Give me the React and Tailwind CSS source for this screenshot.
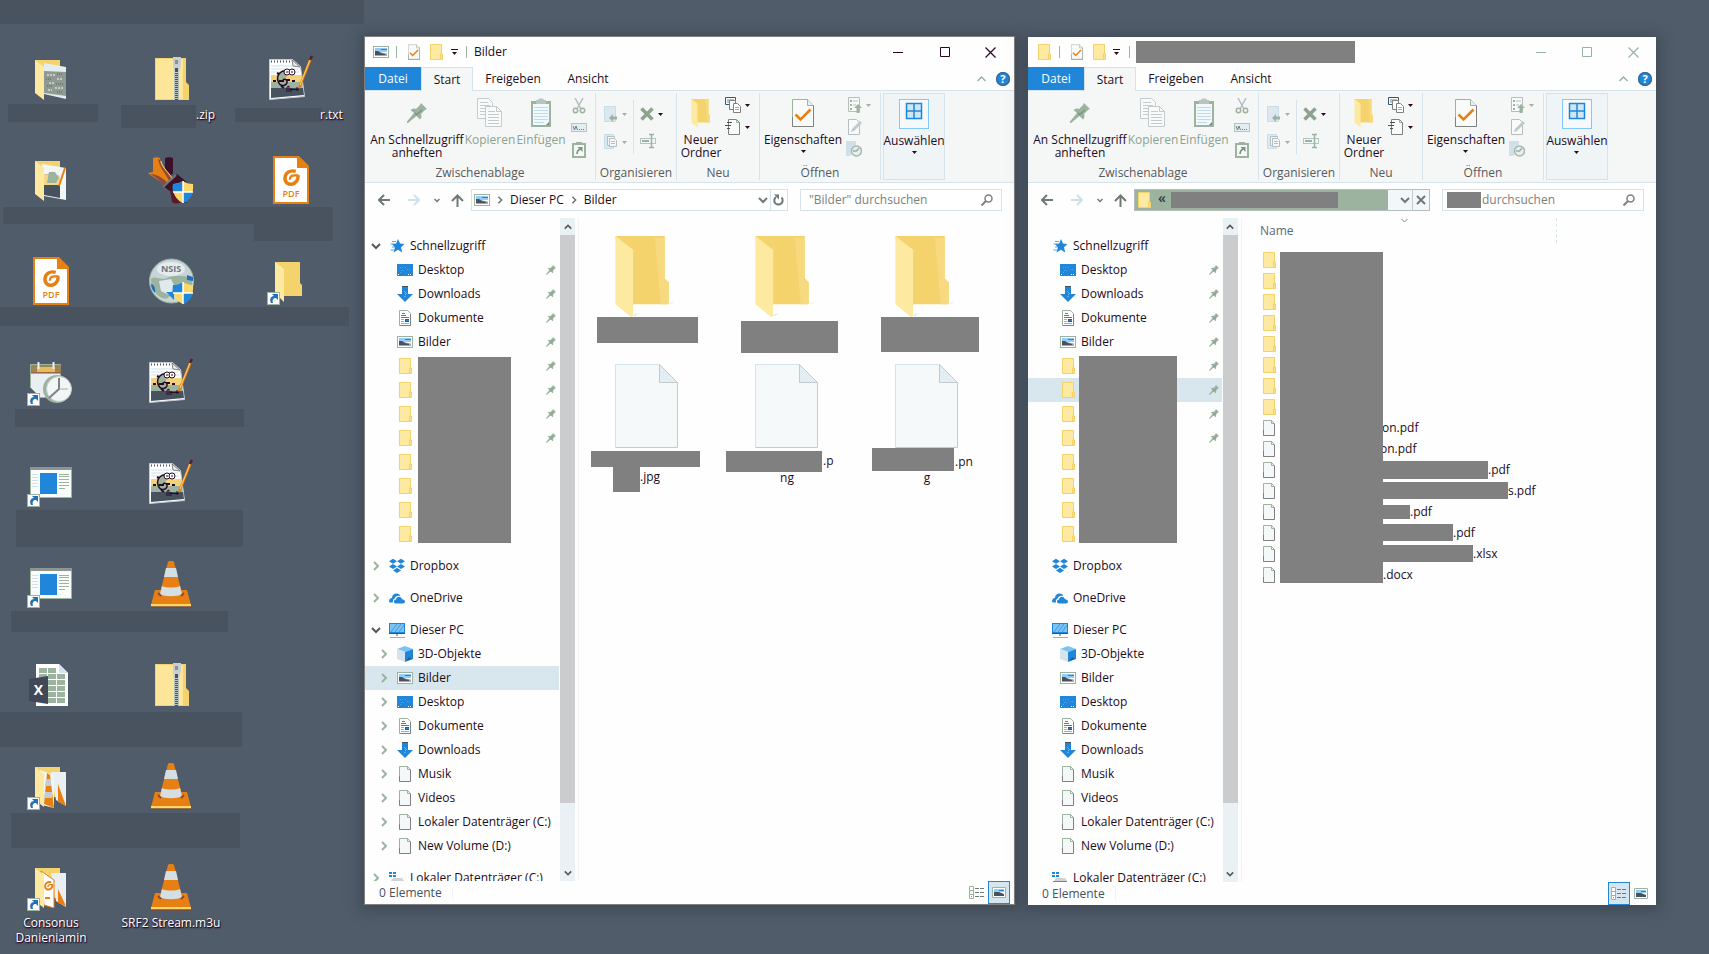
import { useState } from 'react';

/* ---------- small icons (16px) ---------- */

const FolderIcon = () => (
  <svg width="16" height="16" viewBox="0 0 16 16" className="shrink-0">
    <path d="M2.5.5h11v10h1v5h-12z" fill="#fde9a0" stroke="#f3d26a" />
    <path d="M12.5 10v5.5h2V10z" fill="#fbe08c" stroke="#f3d26a" />
  </svg>
);

const FileIcon = () => (
  <svg width="16" height="16" viewBox="0 0 16 16" className="shrink-0">
    <path d="M2.5 15.5V.5h8l3 3v12z" fill="#f5f8f8" />
    <path d="M2.5 15.5V.5h8l3 3" fill="none" stroke="#9bb39f" />
    <path d="M2.5 10v5.5h11v-12" fill="none" stroke="#808080" />
    <path d="M10.5.5v3h3" fill="none" stroke="#9bb39f" />
  </svg>
);

const PictureIcon = () => (
  <svg width="16" height="16" viewBox="0 0 16 16" className="shrink-0">
    <rect x=".5" y="2.5" width="15" height="11" fill="#fff" stroke="#9bb39f" />
    <rect x="2" y="4" width="12" height="4" fill="#93cbf5" />
    <path d="M8 5h6v1H8z" fill="#1f86da" />
    <path d="M2 7.500l4 .5 8 1.500V12H2z" fill="#9aa9b4" />
    <path d="M2 7h3l3 2 4 1v1H2z" fill="#47525f" />
  </svg>
);

const StarIcon = () => (
  <svg width="16" height="16" viewBox="0 0 16 16" className="shrink-0">
    <path d="M9 1l2 4.500 4.500.500-3.500 3.200 1.200 5.300L9 11.700 4.500 14.500l1.400-5L3 6l4.200-.500z" fill="#1f86da" />
    <path d="M3 3.500h4M1.500 6h4M3 9h3M1.500 12h4" stroke="#5aaae6" />
  </svg>
);

const DesktopIcon = () => (
  <svg width="16" height="16" viewBox="0 0 16 16" className="shrink-0">
    <rect y="2" width="16" height="12" fill="#1f86da" />
    <path d="M3 5.500h3M8 5.500h2M4 8.500h4M10 7.500h3M3 10.500h2" stroke="#4fa4e8" strokeDasharray="1 1" />
    <path d="M1 12.500h2M11 12.500h4" stroke="#fff" strokeDasharray="1 1" />
  </svg>
);

const DownloadsIcon = () => (
  <svg width="16" height="16" viewBox="0 0 16 16" className="shrink-0">
    <path d="M5 0h6v8h5l-8 8-8-8h5z" fill="#1f86da" />
    <path d="M5 .5h6" stroke="#47525f" />
    <path d="M7 5l2 2M8 9l2-2M7 11l2-1" stroke="#6db7f0" />
  </svg>
);

const DocumentsIcon = () => (
  <svg width="16" height="16" viewBox="0 0 16 16" className="shrink-0">
    <path d="M2.500 .500h8l3 3v12h-11z" fill="#fff" stroke="#9bb39f" />
    <path d="M13.500 4v11.500H3" fill="none" stroke="#808080" />
    <path d="M5 3.500h3M4 5.500h5M4 7.500h8" stroke="#1f86da" />
    <path d="M4 9.500h3M4 11.500h3M4 13.500h8" stroke="#9bb39f" />
    <path d="M8 9h4v3H8z" fill="#47525f" />
    <path d="M9 10h3v1H9z" fill="#1f86da" />
  </svg>
);

const DropboxIcon = () => (
  <svg width="16" height="16" viewBox="0 0 16 16" className="shrink-0">
    <path d="M4 .8L0 3.300l4 2.500 4-2.500zM12 .8L8 3.300l4 2.500 4-2.500zM4 6L0 8.500 4 11l4-2.500zM12 6L8 8.500l4 2.500 4-2.500zM8 9.800l-4 2.700L8 15l4-2.500z" fill="#1f86da" />
  </svg>
);

const OneDriveIcon = () => (
  <svg width="16" height="16" viewBox="0 0 16 16" className="shrink-0">
    <path d="M0 11.500C0 9 1.500 8 3 8c0-3 2-4.500 4.500-4.500 2 0 3.500 1 4 2.500C8 5 6 7 5.500 8.800 4 9 3.500 10.500 4 12.500H2c-1.200 0-2-.500-2-1z" fill="#1f86da" />
    <path d="M5 11.800c0-1.500 1-2.300 2-2.300.3-1.800 1.500-2.700 3-2.700s2.600 1 3 2.400c1.800 0 3 1 3 2.400 0 1.200-1 1.900-2 1.900H7c-1.200 0-2-.700-2-1.700z" fill="#1f86da" />
  </svg>
);

const PcIcon = () => (
  <svg width="16" height="16" viewBox="0 0 16 16" className="shrink-0">
    <rect x=".5" y="1.500" width="15" height="9" fill="#7cc3f5" stroke="#1f86da" />
    <path d="M2 10l6-8M6 10l6-8M10 10l5-7" stroke="#3a97e2" />
    <path d="M0 11.500h16" stroke="#47525f" />
    <path d="M7 12h2v2H7z" fill="#9aa9b4" />
    <path d="M1 15.500h15" stroke="#9bb39f" />
  </svg>
);

const CubeIcon = () => (
  <svg width="16" height="16" viewBox="0 0 16 16" className="shrink-0">
    <path d="M0 3l8-3 8 3-8 3z" fill="#7cc3f5" />
    <path d="M0 3l8 3v10l-8-3z" fill="#d5e4ec" />
    <path d="M16 3L8 6v10l8-3z" fill="#1f86da" />
    <path d="M9 15l3-4 3 2z" fill="#2b5e8c" />
  </svg>
);

const DriveIcon = () => (
  <svg width="16" height="16" viewBox="0 0 16 16" className="shrink-0">
    <path d="M0 2h3v2H0zM4 2h3v2H4zM0 5h3v2H0zM4 5h3v2H4z" fill="#1f86da" />
    <path d="M4 8h9l2 3H2z" fill="#cdd3d6" />
    <path d="M1 11h14v3H1z" fill="#808080" />
  </svg>
);

const PinIcon = ({ size = 10 }) => (
  <svg width={size} height={size} viewBox="0 0 20 20" className="shrink-0">
    <path d="M14 0l6 6-2 1-4 4c1 2 .500 4-1 5.500l-3.500-3.500L1 20H0v-1.500l7-8.500-3.500-3C5 5.500 7.500 5 9 6l4-4z" fill="#9bb39f" />
    <path d="M9 12l6-5M8 10l2 2" stroke="#7d9481" strokeWidth="1.500" />
  </svg>
);

const Chevron = ({ dir, className }) => {
  const d = { right: 'M3 1l4 4-4 4', down: 'M1 3l4 4 4-4', up: 'M1 7l4-4 4 4' };
  return (
    <svg width="10" height="10" viewBox="0 0 10 10" className={className}>
      <path d={d[dir]} fill="none" stroke="currentColor" strokeWidth="2" />
    </svg>
  );
};

const Caret = ({ className = 'text-[#2a0a22]' }) => (
  <svg width="5" height="3" viewBox="0 0 5 3" className={className}>
    <path d="M0 0h5L2.500 3z" fill="currentColor" />
  </svg>
);

const CheckedFile = ({ w, h }) => (
  <svg width={w} height={h} viewBox="0 0 22 28" className="shrink-0">
    <path d="M.500 27.500V.500h15l6 6v21z" fill="#f9fbfb" stroke="#9bb39f" />
    <path d="M.500 18v9.500h21v-21" fill="none" stroke="#808080" />
    <path d="M15.500 .500v6h6" fill="#e8eff2" stroke="#9bb39f" />
    <path d="M3.500 15.500l5 5 10-10" fill="none" stroke="#e87f12" strokeWidth="2.500" />
  </svg>
);

/* ---------- ribbon icons ---------- */

const CopyIcon = () => (
  <svg width="26" height="30" viewBox="0 0 26 30">
    <path d="M.500 20.500V.500h11l4 4v16z" fill="#f9fbfb" stroke="#c5cacc" />
    <path d="M3 4.500h8M3 7.500h10M3 10.500h10M3 13.500h5M3 16.500h5" stroke="#c5cacc" />
    <path d="M8.500 28.500v-20h11l5 5v15z" fill="#f9fbfb" stroke="#c5cacc" />
    <path d="M19.500 8.500v5h5" fill="none" stroke="#c5cacc" />
    <path d="M11 13.500h7M11 16.500h11M11 19.500h11M11 22.500h11M11 25.500h11" stroke="#c5cacc" />
  </svg>
);

const ClipboardIcon = () => (
  <svg width="20" height="30" viewBox="0 0 20 30">
    <path d="M0 3h20v26H0z" fill="#9bb39f" />
    <path d="M2 6h16v21H2z" fill="#f3f8fb" />
    <path d="M7 2c0-2 6-2 6 0h2v4H5V2z" fill="#b9c3c2" />
    <path d="M3 9.500h14M3 12.500h14M3 15.500h14M3 18.500h14M3 21.500h14M3 24.500h10" stroke="#bdd9ea" />
    <path d="M15 27h3v-3z" fill="#808080" />
  </svg>
);

const ScissorsIcon = () => (
  <svg width="14" height="16" viewBox="0 0 14 16" fill="none">
    <path d="M3 0l6 11M11 0L5 11" stroke="#b5bdbf" strokeWidth="1.500" />
    <circle cx="3.500" cy="12.500" r="2.200" stroke="#9bb39f" strokeWidth="1.500" />
    <circle cx="10.500" cy="12.500" r="2.200" stroke="#9bb39f" strokeWidth="1.500" />
  </svg>
);

const PathIcon = () => (
  <svg width="16" height="10" viewBox="0 0 16 10">
    <rect x=".5" y=".5" width="15" height="8" fill="#e3eef4" stroke="#b5c4c4" />
    <path d="M2 3l1.500 4L5 3l1.500 4" fill="none" stroke="#6f7f76" />
    <path d="M8 6.500h1M10 6.500h1M12 6.500h1" stroke="#6f7f76" />
  </svg>
);

const PasteLinkIcon = () => (
  <svg width="14" height="16" viewBox="0 0 14 16">
    <rect x="1" y="2" width="12" height="13" fill="#f5f8f8" stroke="#9bb39f" strokeWidth="2" />
    <path d="M4 0h6v3H4z" fill="#9bb39f" />
    <path d="M5 12c0-3 1-4 3-5" fill="none" stroke="#7d9481" strokeWidth="1.500" />
    <path d="M5.500 5h5v5z" fill="#7d9481" />
  </svg>
);

const MoveIcon = () => (
  <svg width="14" height="16" viewBox="0 0 14 16">
    <path d="M.500 .500h11v15H.500z" fill="#dbe8ef" stroke="#c9dde8" />
    <path d="M5 12l4-4v2.500h4v3H9V16z" fill="#9bb39f" />
  </svg>
);

const CopyToIcon = () => (
  <svg width="14" height="16" viewBox="0 0 14 16">
    <path d="M.500 .500h9v14h-9z" fill="#dbe8ef" stroke="#c9dde8" />
    <path d="M3.500 2.500h7v9h-7z" fill="#f5f8f8" stroke="#b5bdbf" />
    <path d="M5.500 4.500h5l2 2v6h-7z" fill="#f5f8f8" stroke="#b5bdbf" />
    <path d="M7 7.500h4M7 9.500h4" stroke="#b5bdbf" />
  </svg>
);

const DeleteIcon = () => (
  <svg width="14" height="14" viewBox="0 0 14 14">
    <path d="M1.500 1.500l11 11M12.500 1.500l-11 11" stroke="#8ba38f" strokeWidth="3.500" />
  </svg>
);

const RenameIcon = () => (
  <svg width="16" height="16" viewBox="0 0 16 16" fill="none">
    <rect x=".5" y="5.500" width="15" height="5" stroke="#b5c4c4" />
    <path d="M2 8h7" stroke="#9bb39f" strokeWidth="2" />
    <path d="M9 1.500h5M9 14.500h5M11.500 2v12" stroke="#9bb39f" strokeWidth="1.500" />
  </svg>
);

const OpenFolder = ({ w, h, className = '' }) => (
  <svg width={w} height={h} viewBox="0 0 56 82" className={`shrink-0 ${className}`}>
    <path d="M56 68l5-2-5 3zM18 80l6-2-4 3z" fill="#d5e4ec" />
    <path d="M0 0h50v43l4 4v22H16z" fill="#f5d36c" />
    <path d="M40 2h10v41l4 4v22h-8z" fill="#f7da80" />
    <path d="M0 0l18 14v67l-2 1L0 69z" fill="#fde9a0" />
  </svg>
);

const NewItemIcon = () => (
  <svg width="16" height="16" viewBox="0 0 16 16">
    <path d="M.500 .500h10v7H.500z" fill="#fff" stroke="#47525f" />
    <path d="M2 2h7v4H2z" fill="#93cbf5" />
    <path d="M4.500 3.500h6v9h-6z" fill="#fff" stroke="#808080" />
    <path d="M8.500 6.500h4l3 3v6h-7z" fill="#fff" stroke="#808080" />
    <path d="M10 10.500h4M10 12.500h4" stroke="#9bb39f" />
  </svg>
);

const EasyAccessIcon = () => (
  <svg width="16" height="16" viewBox="0 0 16 16">
    <path d="M3.500 .500h8l3 3v12h-11z" fill="#f9fbfb" stroke="#808080" />
    <path d="M11.500 .500v3h3" fill="none" stroke="#9bb39f" />
    <path d="M2 3.500h5M0 6.500h6M2 9.500h3" stroke="#47525f" />
  </svg>
);

const OpenIcon = () => (
  <svg width="16" height="16" viewBox="0 0 16 16">
    <path d="M2.500 .500h11v14h-11z" fill="#f9fbfb" stroke="#b5bdbf" />
    <path d="M4 3h2v2H4zM4 7h2v2H4zM4 11h2v2H4z" fill="#9bb39f" />
    <path d="M7 4h5M7 8h3" stroke="#b5bdbf" />
    <path d="M12 7l4 4h-2.500v5h-3v-5H8z" fill="#9bb39f" />
  </svg>
);

const EditIcon = () => (
  <svg width="16" height="16" viewBox="0 0 16 16">
    <path d="M2.500 .500h8l3 3v12h-11z" fill="#f9fbfb" stroke="#b5bdbf" />
    <path d="M5 13l1-3 8-8 2 2-8 8z" fill="#c0c8ca" />
  </svg>
);

const HistoryIcon = () => (
  <svg width="16" height="16" viewBox="0 0 16 16">
    <path d="M0 0h10v10l-6 5H0z" fill="#d0e0ea" />
    <circle cx="10.500" cy="10" r="5" fill="#e6eeee" stroke="#a9b8af" strokeWidth="1.500" />
    <path d="M7 10h3.500L13 7" fill="none" stroke="#9bb39f" strokeWidth="1.500" />
  </svg>
);

const SelectIcon = () => (
  <svg width="30" height="30" viewBox="0 0 30 30">
    <rect x=".5" y=".5" width="29" height="29" fill="#f5f9fb" stroke="#84c8f8" />
    <path d="M7.500 4.500h15v15h-15zM15 4v16M7 12h16" fill="#d0e6f5" stroke="#1f86da" strokeWidth="1.500" />
  </svg>
);

/* ---------- desktop icons (48px) ---------- */

const ShortcutBadge = () => (
  <g>
    <rect x=".5" y="35.500" width="12" height="12" fill="#fff" stroke="#9bb39f" />
    <path d="M4 46c-2-4 0-7 3-7l-2-2h6v6l-2-2c-3 0-4 2-3 5z" fill="#2270b5" />
  </g>
);

const Shield = () => (
  <g>
    <path d="M36 25c3 2 6 3 10 3 1 9-3 16-10 19-7-3-11-10-10-19 4 0 7-1 10-3z" fill="#ffd968" />
    <path d="M36 25v11H26c-.500-3-.500-5 0-8 4 0 7-1 10-3zM36 36h10c-1 5-5 9-10 11z" fill="#1f86da" />
    <path d="M36 25v22M26 36h20" stroke="#fff" strokeWidth="1.500" />
  </g>
);

const Cone = () => (
  <g>
    <path d="M8 30h32l4 15H4z" fill="#e87f12" />
    <path d="M4 44h40v2.500H4z" fill="#ffd968" />
    <path d="M21 2c0-1.500 6-1.500 6 0l8 31c-3 4-19 4-22 0z" fill="#e87f12" />
    <path d="M19 8h10l2 9H17zM15 26c4 2 14 2 18 0l2 8c-4 3-18 3-22 0z" fill="#d4dfe3" />
    <path d="M14 36l-3-3M34 36l3-3" stroke="#8d4a3a" strokeWidth="2" />
    <path d="M4 47h40" stroke="#8d3f20" />
  </g>
);

const FoxitG = ({ x, y, s }) => (
  <g transform={`translate(${x} ${y}) scale(${s})`} fill="none" stroke="#e87f12">
    <path d="M13 2.500C7 .500 2 4 2 9.500 2 14 5.500 16 9 15.500c4-.700 6.500-4 6.500-9" strokeWidth="3.500" />
    <path d="M16 6.500h-4C9 6.500 7 8 7 11" strokeWidth="2.200" />
  </g>
);

const DesktopGlyph = ({ type }) => {
  const glyphs = {
    photos: (
      <g>
        <path d="M8 5h25v30H8z" fill="#f5d36c" />
        <path d="M17 8l22 4v32l-22-5z" fill="#e5ecee" />
        <path d="M17 16l22 1v24l-22-3z" fill="#8f9a92" />
        <path d="M20 20h8M30 24h6M22 28h5M28 33h9M21 35h4" stroke="#c3ccc5" strokeWidth="2" strokeDasharray="2 1" />
        <path d="M19 24h6M29 29h7M20 31h6M30 19h6M30 37h6" stroke="#747d78" strokeWidth="2" strokeDasharray="1 1" />
        <path d="M8 5l9 7v33l-9-7z" fill="#fde9a0" />
      </g>
    ),
    pictures: (
      <g>
        <path d="M8 5h25v30H8z" fill="#f5d36c" />
        <path d="M15 8l24 4v32l-22-4z" fill="#f3f6f7" />
        <path d="M17 18l16 2v22l-16-3z" fill="#47525f" />
        <path d="M17 18l16 2v9H17z" fill="#f2d98a" />
        <path d="M22 16h6l4 6-3 5h-9z" fill="#9bb39f" />
        <path d="M38 12l-6 18" stroke="#e87f12" strokeWidth="2" />
        <path d="M8 5l9 7v33l-9-7z" fill="#fde9a0" />
      </g>
    ),
    zip: (
      <g>
        <path d="M8 3h31v24l3 3v15H8z" fill="#f5d36c" />
        <path d="M9 4h27v40H9z" fill="#fde59a" />
        <path d="M27 3h5v42h-5z" fill="#b7c2bf" />
        <path d="M29.500 14v31" stroke="#47525f" strokeWidth="3" strokeDasharray="1 1" />
        <path d="M26 2h8v8l-2 8h-5l-1-8z" fill="#c9ced0" />
        <path d="M28 5h3v4h-3z" fill="#8b9296" />
        <path d="M28 13h3v4h-3z" fill="#47525f" />
      </g>
    ),
    notepad: (
      <g>
        <path d="M2.500 4.500h23l8 7 4 30-35 3z" fill="#fff" stroke="#c5cacc" />
        <path d="M4 11h26M4 14h27M4 17h28" stroke="#cfe1ec" />
        <path d="M4 20h30l1 9H4z" fill="#f2d27a" />
        <path d="M4 27h31l1 7H4z" fill="#9bb39f" />
        <path d="M4 33h32l1 7-33 3z" fill="#47525f" />
        <path d="M4 6.500h21" stroke="#47525f" strokeWidth="2" strokeDasharray="1 2" />
        <path d="M25 5l1 6 7 1z" fill="#e8eef0" stroke="#808080" />
        <path d="M22 17c-7-4-13 3-11 9 2 7 10 5 9 0-1-3-5-2-4 1" fill="#9bb39f" stroke="#2a0a22" strokeWidth="1.500" />
        <path d="M6 26h3M12 26h5M19 25h4M25 26h3M12 19l-2-1M14 31l3 2" stroke="#2a0a22" strokeWidth="2" />
        <circle cx="20" cy="17" r="3" fill="#fff" stroke="#2a0a22" />
        <circle cx="25" cy="17" r="3" fill="#fff" stroke="#2a0a22" />
        <path d="M20 16v2M25 16v2" stroke="#2a0a22" />
        <path d="M20 37v-5l2-1v6M24 33v4M23 34.500h5M30 32v4M28 34.500h4" fill="none" stroke="#2a0a22" />
        <path d="M44 3L32 33" stroke="#e87f12" strokeWidth="2.500" />
        <path d="M43 5L33 30" stroke="#ffd968" />
        <path d="M43 5l2-4" stroke="#5c1a26" strokeWidth="2.500" />
      </g>
    ),
    installer: (
      <g>
        <path d="M18 2c2-1 6-1 8 0v15l-4 5-4-8z" fill="#3c1028" />
        <path d="M6 2c2-1 5-1 7 0 0 8 9 14 13 22l-7 9C15 24 6 22 1 17l5-1z" fill="#e87f12" />
        <path d="M3 18c6 3 12 8 16 15l3-4C17 22 10 18 3 18z" fill="#8d4a3a" />
        <path d="M13 4c0 7 11 15 13 22l-2 2C19 18 13 13 11 3z" fill="#8d4a3a" />
        <path d="M14 5c1 7 9 12 12 19" fill="none" stroke="#ffd968" />
        <path d="M16 30l14-12 12 10-4 8H24z" fill="#3c1028" />
        <path d="M16 31l13-12" stroke="#6d7780" strokeWidth="2" />
        <path d="M23 34h8l3 12c-3 2-7 2-9 0z" fill="#5c1a26" />
        <path d="M34 44l6 3h-5z" fill="#3c1028" />
        <Shield />
      </g>
    ),
    pdf: (
      <g>
        <path d="M7 1h24v10h10v36H7z" fill="#fff" stroke="#e87f12" strokeWidth="2" />
        <path d="M32 0l10 10v1H32z" fill="#e87f12" />
        <FoxitG x={16} y={13} s={0.98} />
        <text x="24" y="41" textAnchor="middle" fontSize="9" fontWeight="600" fontFamily="Open Sans" fill="#e87f12">PDF</text>
      </g>
    ),
    globe: (
      <g>
        <circle cx="24.500" cy="24" r="22" fill="#c8d4d6" stroke="#9bb39f" />
        <path d="M4 22c4-4 10 2 16-1s16-3 25 0v7c-6 4-14 0-18 5s-6 11-12 8S4 32 4 22z" fill="#9bb39f" />
        <path d="M12 24l12-2 4 8-6 8-8-4z" fill="#dfe9ee" />
        <path d="M4 27c3 0 5 5 4 9-3-3-4-6-4-9zM40 18l6 2v4l-6-1z" fill="#2270b5" />
        <path d="M19 35h8v8z" fill="#1f86da" />
        <ellipse cx="24" cy="12" rx="14" ry="7" fill="#e5ecee" />
        <text x="24" y="15" textAnchor="middle" fontSize="9" fontWeight="700" fontFamily="Open Sans" fill="#6d7780">NSIS</text>
        <Shield />
      </g>
    ),
    folderLink: (
      <g>
        <path d="M8 5h25v21l2 2v11H16z" fill="#f5d36c" />
        <path d="M8 5l9 7v33l-9-9z" fill="#fde9a0" />
        <ShortcutBadge />
      </g>
    ),
    scheduler: (
      <g>
        <path d="M3.500 6.500h30v33h-20l-10-10z" fill="#e9eff2" stroke="#9bb39f" />
        <path d="M4 7h30v8H4z" fill="#9c8455" />
        <path d="M10 9h18v5H10z" fill="#e5bd5e" />
        <path d="M4 15h30" stroke="#a4483c" />
        <path d="M11.500 4v7M26.500 4v7" stroke="#e9eff2" strokeWidth="2" />
        <circle cx="30" cy="31" r="14" fill="#9bb39f" />
        <circle cx="32" cy="31" r="12.500" fill="#f3f6f7" stroke="#c5cacc" />
        <path d="M32 20v11l-10 9" fill="none" stroke="#808080" strokeWidth="2" />
        <path d="M32 31h9" stroke="#9bb39f" />
        <ShortcutBadge />
      </g>
    ),
    appWindow: (
      <g>
        <rect x="3.500" y="8.500" width="41" height="30" fill="#fafcfc" stroke="#9bb39f" />
        <path d="M3 9.500h42" stroke="#8d9690" strokeWidth="3" />
        <path d="M5 15.500h6M5 18.500h6M5 21.500h6M5 24.500h6M5 27.500h6" stroke="#cfe1ec" />
        <path d="M13 14h17v21H13z" fill="#1f86da" />
        <path d="M32 15.500h10M32 17.500h10M32 20.500h10M32 23.500h10M32 26.500h10M32 29.500h6" stroke="#9bb39f" />
        <ShortcutBadge />
      </g>
    ),
    cone: <Cone />,
    excel: (
      <g>
        <path d="M9 3h23l9 9v33H9z" fill="#fff" />
        <path d="M32 3l9 9h-9z" fill="#d5e4ec" />
        <path d="M12 7h8v5h-8zM21 7h8v5h-8zM12 13h8v5h-8zM21 13h8v5h-8zM30 13h8v5h-8zM21 19h8v5h-8zM30 19h8v5h-8zM21 25h8v5h-8zM30 25h8v5h-8zM21 31h8v5h-8zM30 31h8v5h-8zM21 37h8v5h-8zM30 37h8v5h-8z" fill="#9bb39f" />
        <path d="M2 18l19-3v28L2 40z" fill="#414958" />
        <text x="11.500" y="34" textAnchor="middle" fontSize="14" fontWeight="700" fontFamily="Open Sans" fill="#fff">X</text>
      </g>
    ),
    coneFolder: (
      <g>
        <path d="M8 5h25v30H8z" fill="#f5d36c" />
        <path d="M24 10h15v34l-10-6z" fill="#e9eff2" />
        <path d="M31 22l8 22-8-4z" fill="#e87f12" />
        <path d="M13 8l14 5v33l-12-3z" fill="#f3f6f7" />
        <path d="M8 5l9 7v33l-9-7z" fill="#fde9a0" />
        <path d="M20 11l3 2 4 33-10-4z" fill="#e87f12" />
        <path d="M19 17h5v7h-6zM18 30h7v6h-8z" fill="#c3ccd0" />
        <ShortcutBadge />
      </g>
    ),
    pdfFolder: (
      <g>
        <path d="M8 5h25v30H8z" fill="#f5d36c" />
        <path d="M24 10h15v34l-10-6z" fill="#e9eff2" />
        <path d="M31 26l8 17-8-3z" fill="#e87f12" />
        <path d="M14 8l13 9v28l-10-3z" fill="#fff" stroke="#e87f12" />
        <path d="M8 5l9 7v33l-9-7z" fill="#fde9a0" />
        <FoxitG x={17} y={18} s={0.55} />
        <path d="M18 35h5" stroke="#e87f12" strokeWidth="2" />
        <ShortcutBadge />
      </g>
    ),
  };
  return (
    <svg width="48" height="48" viewBox="0 0 48 48">
      {glyphs[type]}
    </svg>
  );
};

/* ---------- desktop ---------- */

const desktopItems = [
  { type: 'photos' },
  { type: 'zip', label: '.zip', labelClass: 'w-full pl-[94px] text-left' },
  { type: 'notepad', label: 'r.txt', labelClass: 'w-full pl-[80px] text-left' },
  { type: 'pictures' },
  { type: 'installer' },
  { type: 'pdf' },
  { type: 'pdf' },
  { type: 'globe' },
  { type: 'folderLink' },
  { type: 'scheduler' },
  { type: 'notepad' },
  null,
  { type: 'appWindow' },
  { type: 'notepad' },
  null,
  { type: 'appWindow' },
  { type: 'cone' },
  null,
  { type: 'excel' },
  { type: 'zip' },
  null,
  { type: 'coneFolder' },
  { type: 'cone' },
  null,
  { type: 'pdfFolder', label: 'Consonus Danieniamin', labelClass: 'max-w-[96px]' },
  { type: 'cone', label: 'SRF2 Stream.m3u', labelClass: 'whitespace-nowrap' },
  null,
];

const coveredLabels = [
  'left-0 top-0 w-[364px] h-6',
  'left-[8px] top-[104px] w-[90px] h-[18px]',
  'left-[121px] top-[105px] w-[75px] h-[23px]',
  'left-[235px] top-[108px] w-[87px] h-[14px]',
  'left-[3px] top-[207px] w-[330px] h-[17px]',
  'left-[254px] top-[224px] w-[79px] h-[17px]',
  'left-0 top-[307px] w-[349px] h-[19px]',
  'left-[15px] top-[409px] w-[229px] h-[18px]',
  'left-[16px] top-[510px] w-[227px] h-[37px]',
  'left-[11px] top-[611px] w-[217px] h-[21px]',
  'left-0 top-[712px] w-[242px] h-[35px]',
  'left-[11px] top-[813px] w-[229px] h-[35px]',
];

const Desktop = () => (
  <div className="relative w-[364px] shrink-0">
    {coveredLabels.map((box) => (
      <div key={box} className={`absolute bg-[#48535f] ${box}`} />
    ))}
    <div className="relative grid auto-rows-[101px] grid-cols-[102px_138px_102px] pt-[55px]">
      {desktopItems.map((item, i) =>
        item ? (
          <button key={i} aria-label={item.label || item.type} className="flex flex-col items-center justify-start gap-1">
            <DesktopGlyph type={item.type} />
            {item.label && (
              <span className={`text-[12px] leading-[15px] text-white [text-shadow:1px_1px_1px_#2a0a22,0_1px_2px_#2a0a22] ${item.labelClass}`}>
                {item.label}
              </span>
            )}
          </button>
        ) : (
          <span key={i} />
        )
      )}
    </div>
  </div>
);

/* ---------- explorer window ---------- */

const TitleBar = ({ icon, title, active }) => (
  <div className="flex h-[30px] items-center pl-2">
    {icon}
    <span className="ml-[7px] h-3 w-px bg-[#9bb39f]" />
    <button aria-label="Eigenschaften" className="ml-[11px]">
      <CheckedFile w={12} h={16} />
    </button>
    <button aria-label="Neuer Ordner" className="ml-2">
      <FolderIcon />
    </button>
    <button aria-label="Symbolleiste anpassen" className="ml-0.5 flex w-4 flex-col items-center gap-0.5">
      <span className="h-px w-[7px] bg-[#2a0a22]" />
      <Caret />
    </button>
    <span className="ml-1 h-3 w-px bg-[#9bb39f]" />
    {title}
    <div className={`ml-auto flex self-stretch ${active ? 'text-[#2a0a22]' : 'text-[#9bb39f]'}`}>
      <button aria-label="Minimieren" className="flex w-[46px] items-center justify-center">
        <svg width="11" height="11" viewBox="0 0 11 11"><path d="M0 5.500h10" stroke="currentColor" /></svg>
      </button>
      <button aria-label="Maximieren" className="flex w-[46px] items-center justify-center">
        <svg width="10" height="10" viewBox="0 0 10 10"><path d="M.500 .500h9v9h-9z" fill="none" stroke="currentColor" /></svg>
      </button>
      <button aria-label="Schließen" className="flex w-[46px] items-center justify-center">
        <svg width="11" height="11" viewBox="0 0 11 11"><path d="M.500 .500l10 10M10.500 .500l-10 10" stroke="currentColor" strokeWidth="1.200" /></svg>
      </button>
    </div>
  </div>
);

const Tabs = () => (
  <div className="flex h-6 border-b border-[#d5e4ec]">
    <button className="h-[23px] w-14 bg-[#1f86da] text-white">Datei</button>
    <button className="-mb-px w-[52px] border border-b-0 border-[#d5e4ec] bg-[#f5f7f7]">Start</button>
    <button className="w-20">Freigeben</button>
    <button className="w-[70px]">Ansicht</button>
    <div className="ml-auto flex items-center gap-2.5 pr-1">
      <button aria-label="Menüband minimieren">
        <svg width="9" height="6" viewBox="0 0 9 6"><path d="M.500 5l4-4 4 4" fill="none" stroke="#9bb39f" strokeWidth="1.500" /></svg>
      </button>
      <button aria-label="Hilfe" className="flex h-3.5 w-3.5 items-center justify-center rounded-full bg-[#1f86da] text-[11px] font-bold text-white ring-1 ring-[#3f5f7c] ring-inset">
        ?
      </button>
    </div>
  </div>
);

const BigButton = ({ icon, width, muted, caret, children }) => (
  <button className={`flex flex-col items-center ${width} ${muted ? 'text-[#8ba38f]' : ''}`}>
    <span className="flex h-10 items-center justify-center">{icon}</span>
    <span className="text-center leading-[13px] whitespace-nowrap">{children}</span>
    {caret && <Caret className="mt-1 text-[#2a0a22]" />}
  </button>
);

const Group = ({ label, width, children }) => (
  <div className={`my-0.5 flex flex-col border-r border-[#d5e4ec] ${width}`}>
    <div className="flex flex-1">{children}</div>
    <div className="text-center leading-[14px] text-[#565a5a]">{label}</div>
  </div>
);

const SmallButton = ({ label, icon, caret }) => (
  <button aria-label={label} className="flex items-center gap-1">
    {icon}
    {caret && <Caret className={caret} />}
  </button>
);

const Ribbon = () => (
  <div className="flex h-[92px] border-b border-[#d5e4ec] bg-[#f5f7f7]">
    <Group label="Zwischenablage" width="w-[231px]">
      <BigButton width="w-[100px] pl-1" icon={<PinIcon size={20} />}>
        An Schnellzugriff
        <br />
        anheften
      </BigButton>
      <BigButton width="w-[50px]" muted icon={<CopyIcon />}>Kopieren</BigButton>
      <BigButton width="w-[52px]" muted icon={<ClipboardIcon />}>Einfügen</BigButton>
      <div className="flex flex-col items-center gap-[9px] pt-[5px] pl-1">
        <SmallButton label="Ausschneiden" icon={<ScissorsIcon />} />
        <SmallButton label="Pfad kopieren" icon={<PathIcon />} />
        <SmallButton label="Verknüpfung einfügen" icon={<PasteLinkIcon />} />
      </div>
    </Group>
    <Group label="Organisieren" width="w-[81px]">
      <div className="flex flex-1 flex-col gap-3 pt-[13px] pl-2">
        <SmallButton label="Verschieben nach" icon={<MoveIcon />} caret="text-[#9bb39f]" />
        <SmallButton label="Kopieren nach" icon={<CopyToIcon />} caret="text-[#9bb39f]" />
      </div>
      <div className="mt-[7px] mb-3 flex w-[43px] flex-col gap-3 border-l border-[#d5e4ec] pt-[7px] pl-1.5">
        <SmallButton label="Löschen" icon={<DeleteIcon />} caret="text-[#2a0a22]" />
        <SmallButton label="Umbenennen" icon={<RenameIcon />} />
      </div>
    </Group>
    <Group label="Neu" width="w-[83px]">
      <BigButton width="w-[48px]" icon={<OpenFolder w={20} h={28} />}>
        Neuer
        <br />
        Ordner
      </BigButton>
      <div className="flex flex-col gap-1.5 pt-1">
        <SmallButton label="Neues Element" icon={<NewItemIcon />} caret="text-[#2a0a22]" />
        <SmallButton label="Einfacher Zugriff" icon={<EasyAccessIcon />} caret="text-[#2a0a22]" />
      </div>
    </Group>
    <Group label="Öffnen" width="w-[121px]">
      <BigButton width="w-[86px]" caret icon={<CheckedFile w={22} h={28} />}>Eigenschaften</BigButton>
      <div className="flex flex-col gap-1.5 pt-1">
        <SmallButton label="Öffnen" icon={<OpenIcon />} caret="text-[#9bb39f]" />
        <SmallButton label="Bearbeiten" icon={<EditIcon />} />
        <SmallButton label="Verlauf" icon={<HistoryIcon />} />
      </div>
    </Group>
    <div className="my-0.5 ml-0.5 flex border border-[#d5e4ec] bg-[#eff4f7]">
      <BigButton width="w-[60px]" caret icon={<SelectIcon />}>Auswählen</BigButton>
    </div>
  </div>
);

const NavArrow = ({ d, className }) => (
  <svg width="13" height="12" viewBox="0 0 13 12" className={className}>
    <path d={d} fill="none" stroke="currentColor" strokeWidth="2" />
  </svg>
);

const NavBar = ({ children, searchText, searchCover }) => (
  <div className="flex h-[35px] items-start pt-1.5 pr-3 pl-[13px]">
    <div className="flex h-[22px] w-[93px] shrink-0 items-center text-[#6f7a74]">
      <button aria-label="Zurück"><NavArrow d="M12 6H1M6 1L1 6l5 5" /></button>
      <button aria-label="Vorwärts" className="ml-4 text-[#d0e0ea]"><NavArrow d="M1 6h11M7 1l5 5-5 5" /></button>
      <button aria-label="Zuletzt besucht" className="ml-3.5">
        <svg width="6" height="5" viewBox="0 0 6 5"><path d="M.500 1L3 3.500 5.500 1" fill="none" stroke="currentColor" strokeWidth="1.500" /></svg>
      </button>
      <button aria-label="Nach oben" className="ml-[11px]">
        <svg width="13" height="13" viewBox="0 0 13 13"><path d="M6.500 13V1.500M1 7l5.500-5.500L12 7" fill="none" stroke="currentColor" strokeWidth="2" /></svg>
      </button>
    </div>
    {children}
    <label className="relative ml-3 flex h-[22px] w-[202px] shrink-0 items-center border border-[#d5e4ec] bg-white">
      {searchCover && <span className="ml-1 h-4 w-[34px] shrink-0 bg-[#808080]" />}
      <input
        type="search"
        aria-label="Durchsuchen"
        placeholder={searchText}
        className={`min-w-0 flex-1 bg-transparent outline-none placeholder:text-[#7b807e] ${searchCover ? 'pl-px' : 'pl-2'}`}
      />
      <svg width="12" height="12" viewBox="0 0 12 12" className="mr-2 shrink-0">
        <circle cx="7.500" cy="4.500" r="3.500" fill="none" stroke="#808080" strokeWidth="1.500" />
        <path d="M5 7l-4.500 4.500" stroke="#808080" strokeWidth="2" />
      </svg>
    </label>
  </div>
);

const TreeRow = ({ icon, label, level = 0, open, arrows, selected, pinned, className = '' }) => (
  <li className={`flex h-6 shrink-0 items-center ${level ? 'pl-[13px]' : 'pl-[5px]'} ${selected ? 'bg-[#d8e6ee]' : ''} ${className}`}>
    <span className="flex w-[19px] shrink-0 items-center pl-px">
      {arrows && <Chevron dir={open ? 'down' : 'right'} className={open ? 'text-[#565a5a]' : 'text-[#9bb39f]'} />}
    </span>
    {icon}
    {label && <a href="#" className="ml-[5px] whitespace-nowrap">{label}</a>}
    {pinned && <span className="mr-[3px] ml-auto"><PinIcon /></span>}
  </li>
);

const quickAccess = [
  { label: 'Desktop', icon: <DesktopIcon /> },
  { label: 'Downloads', icon: <DownloadsIcon /> },
  { label: 'Dokumente', icon: <DocumentsIcon /> },
  { label: 'Bilder', icon: <PictureIcon /> },
];

const thisPc = [
  { label: '3D-Objekte', icon: <CubeIcon /> },
  { label: 'Bilder', icon: <PictureIcon /> },
  { label: 'Desktop', icon: <DesktopIcon /> },
  { label: 'Dokumente', icon: <DocumentsIcon /> },
  { label: 'Downloads', icon: <DownloadsIcon /> },
  { label: 'Musik', icon: <FileIcon /> },
  { label: 'Videos', icon: <FileIcon /> },
  { label: 'Lokaler Datenträger (C:)', icon: <FileIcon /> },
  { label: 'New Volume (D:)', icon: <FileIcon /> },
];

const Sidebar = ({ arrows, selectedPc, selectedFolder, cover }) => (
  <nav className="flex w-[214px] shrink-0 border-r border-[#f0f4f5]">
    <ul className="flex w-[195px] flex-col overflow-hidden pt-4 pr-px">
      <TreeRow label="Schnellzugriff" icon={<StarIcon />} arrows={arrows} open />
      {quickAccess.map((item) => (
        <TreeRow key={item.label} {...item} level={1} pinned />
      ))}
      <li className="relative shrink-0">
        <ul>
          {[0, 1, 2, 3, 4, 5, 6, 7].map((n) => (
            <TreeRow key={n} icon={<FolderIcon />} level={1} pinned={n < 4} selected={n === selectedFolder} />
          ))}
        </ul>
        <div className={`absolute bg-[#808080] ${cover}`} />
      </li>
      <TreeRow label="Dropbox" icon={<DropboxIcon />} arrows={arrows} className="mt-2" />
      <TreeRow label="OneDrive" icon={<OneDriveIcon />} arrows={arrows} className="mt-2" />
      <TreeRow label="Dieser PC" icon={<PcIcon />} arrows={arrows} open className="mt-2" />
      {thisPc.map((item) => (
        <TreeRow key={item.label} {...item} level={1} arrows={arrows} selected={item.label === selectedPc} />
      ))}
      <TreeRow label="Lokaler Datenträger (C:)" icon={<DriveIcon />} arrows={arrows} className="mt-2" />
    </ul>
    <div className="flex w-[15px] flex-col bg-[#eaf1f4] text-[#565a5a]">
      <button aria-label="Nach oben scrollen" className="flex h-[17px] shrink-0 items-center justify-center">
        <Chevron dir="up" className="h-2 w-2" />
      </button>
      <div className="h-[568px] bg-[#cbccce]" />
      <button aria-label="Nach unten scrollen" className="mt-auto flex h-4 shrink-0 items-center justify-center">
        <Chevron dir="down" className="h-2 w-2" />
      </button>
    </div>
  </nav>
);

const StatusBar = ({ view }) => {
  const [mode, setMode] = useState(view);
  const base = 'flex h-[23px] w-[22px] items-center justify-center border';
  const on = 'border-[#1f86da] bg-[#d5e6f0]';
  const off = 'border-transparent';
  return (
    <div className="flex h-[23px] shrink-0 items-center pr-1 pl-3.5 text-[#47525f]">
      <span>0 Elemente</span>
      <span className="ml-2.5 h-3 w-px bg-[#eef2f3]" />
      <div className="ml-auto flex">
        <button aria-label="Details" onClick={() => setMode('details')} className={`${base} ${mode === 'details' ? on : off}`}>
          <svg width="16" height="13" viewBox="0 0 16 13">
            <path d="M.500 .500h4v12h-4zM.500 4.500h4M.500 8.500h4" fill="#fff" stroke="#9bb39f" />
            <path d="M6 2.500h4M11 2.500h4M6 6.500h4M11 6.500h4M6 10.500h4M11 10.500h4" stroke="#6f7a74" />
            <path d="M2 10h1v1H2z" fill="#e87f12" />
          </svg>
        </button>
        <button aria-label="Große Symbole" onClick={() => setMode('icons')} className={`${base} ${mode === 'icons' ? on : off}`}>
          <svg width="14" height="11" viewBox="0 0 14 11">
            <path d="M.500 .500h13v10H.500z" fill="#fff" stroke="#9bb39f" />
            <path d="M2 2h10v3H2z" fill="#93cbf5" />
            <path d="M7 3h5v1H7z" fill="#1f86da" />
            <path d="M2 5h5l5 2v2H2z" fill="#47525f" />
          </svg>
        </button>
      </div>
    </div>
  );
};

/* ---------- window contents ---------- */

const BigFile = () => (
  <svg width="63" height="84" viewBox="0 0 63 84">
    <path d="M.500 83.500V.500h44l18 18v65z" fill="#f6f9f9" />
    <path d="M.500 83.500V.500h44l18 18" fill="none" stroke="#d5e4ec" />
    <path d="M.500 83.500h62v-65" fill="none" stroke="#c5cacc" />
    <path d="M44.500 .500v18h18z" fill="#e2edf4" stroke="#c5cacc" />
  </svg>
);

const folderCovers = [
  'mt-0 ml-[18px] h-[26px] w-[101px]',
  'mt-1 ml-[22px] h-8 w-[97px]',
  'mt-0 ml-[22px] h-[35px] w-[98px]',
];

const IconView = () => (
  <div className="grid min-w-0 flex-1 auto-rows-[128px] grid-cols-[repeat(auto-fill,140px)] content-start overflow-hidden pt-[18px]">
    {folderCovers.map((cover, i) => (
      <div key={i} className="flex flex-col items-start">
        <OpenFolder w={56} h={81} className="ml-9 overflow-visible" />
        <div className={`bg-[#808080] ${cover}`} />
      </div>
    ))}
    <div>
      <div className="pl-9"><BigFile /></div>
      <div className="mt-[3px] ml-3 h-4 w-[109px] bg-[#808080]" />
      <div className="ml-[34px] flex h-[25px] items-start">
        <span className="h-[25px] w-[27px] bg-[#808080]" />
        <span className="pt-0.5 leading-4">.jpg</span>
      </div>
    </div>
    <div>
      <div className="pl-9"><BigFile /></div>
      <div className="mt-[3px] ml-[7px] flex h-[19px]">
        <span className="h-[21px] w-24 bg-[#808080]" />
        <span className="pl-px leading-5">.p</span>
      </div>
      <div className="pr-1 text-center leading-4">ng</div>
    </div>
    <div>
      <div className="pl-9"><BigFile /></div>
      <div className="ml-[13px] flex h-[22px]">
        <span className="h-[23px] w-[82px] bg-[#808080]" />
        <span className="pt-0.5 pl-px leading-6">.pn</span>
      </div>
      <div className="pr-1 text-center leading-4">g</div>
    </div>
  </div>
);

const files = [
  { text: 'on.pdf', bar: 'h-[21px] w-[102px]' },
  { text: 'on.pdf', bar: 'h-[21px] w-[100px]' },
  { text: '.pdf', bar: 'h-[18px] w-[208px]' },
  { text: 's.pdf', bar: 'h-[17px] w-[228px]' },
  { text: '.pdf', bar: 'h-[14px] w-[130px]' },
  { text: '.pdf', bar: 'h-[17px] w-[173px]' },
  { text: '.xlsx', bar: 'h-[17px] w-[193px]' },
  { text: '.docx', bar: 'h-[17px] w-[103px]' },
];

const DetailsView = () => (
  <div className="relative min-w-0 flex-1 overflow-hidden pl-[18px]">
    <table className="w-[297px] border-collapse">
      <thead>
        <tr>
          <th className="relative h-[25px] border-r border-dashed border-[#d5e4ec] p-0 text-left font-normal text-[#566a7c]">
            Name
            <svg width="7" height="5" viewBox="0 0 7 5" className="absolute top-0 left-[141px]">
              <path d="M.500 1l3 3 3-3" fill="none" stroke="#808080" />
            </svg>
          </th>
        </tr>
        <tr><td className="h-1.5 p-0" /></tr>
      </thead>
      <tbody>
        {[0, 1, 2, 3, 4, 5, 6, 7].map((n) => (
          <tr key={n}>
            <td className="h-[21px] p-0 pl-px"><FolderIcon /></td>
          </tr>
        ))}
        {files.map((file, i) => (
          <tr key={i}>
            <td className="h-[21px] p-0 pl-px">
              <div className="flex h-[21px] items-center">
                <FileIcon />
                <span className={`ml-[3px] shrink-0 bg-[#808080] ${file.bar}`} />
                <span>{file.text}</span>
              </div>
            </td>
          </tr>
        ))}
      </tbody>
    </table>
    <div className="absolute top-[34px] left-[38px] h-[331px] w-[103px] bg-[#808080]" />
  </div>
);

const BilderWindow = () => (
  <section className="flex min-w-0 flex-[650] flex-col border border-[#808080] bg-[#fefefe] shadow-[0_2px_12px_4px_rgba(50,58,70,0.5)]">
    <TitleBar active icon={<PictureIcon />} title={<h1 className="ml-[7px]">Bilder</h1>} />
    <Tabs />
    <Ribbon />
    <NavBar searchText={'"Bilder" durchsuchen'}>
      <div className="flex h-[22px] flex-1 items-center border border-[#d5e4ec] bg-white pl-0.5">
        <PictureIcon />
        <Chevron dir="right" className="ml-1.5 h-2 w-2 text-[#6f7a74]" />
        <a href="#" className="ml-1.5">Dieser PC</a>
        <Chevron dir="right" className="ml-1.5 h-2 w-2 text-[#6f7a74]" />
        <a href="#" className="ml-1.5">Bilder</a>
        <button aria-label="Verlauf anzeigen" className="ml-auto px-0.5">
          <Chevron dir="down" className="text-[#6f7a74]" />
        </button>
        <button aria-label="Aktualisieren" className="flex h-full w-[17px] items-center justify-center border-l border-[#d5e4ec]">
          <svg width="11" height="12" viewBox="0 0 11 12">
            <path d="M3 3a4.200 4.200 0 1 0 5.500 .500" fill="none" stroke="#6f7a74" strokeWidth="2" />
            <path d="M1 .500h5v5z" fill="#6f7a74" />
          </svg>
        </button>
      </div>
    </NavBar>
    <div className="flex min-h-0 flex-1">
      <Sidebar arrows selectedPc="Bilder" cover="top-[3px] left-[53px] h-[186px] w-[93px]" />
      <IconView />
    </div>
    <StatusBar view="icons" />
  </section>
);

const DetailsWindow = () => (
  <section className="mt-px flex min-w-0 flex-[629] flex-col bg-[#fefefe] shadow-[0_2px_12px_4px_rgba(50,58,70,0.5)]">
    <TitleBar icon={<FolderIcon />} title={<span className="ml-1.5 h-[22px] w-[219px] bg-[#808080]" />} />
    <Tabs />
    <Ribbon />
    <NavBar searchText="durchsuchen" searchCover>
      <div className="flex h-[22px] flex-1 items-center border border-[#b5bdbf] bg-[#f2f7f9]">
        <div className="flex h-full flex-1 items-center bg-[#9bb39f] pl-px">
          <FolderIcon />
          <span className="ml-1.5 w-[11px] pb-1 text-[14px] leading-4 font-semibold text-[#2f3b48]">«</span>
          <span className="ml-0.5 h-4 w-[167px] bg-[#808080]" />
        </div>
        <button aria-label="Verlauf anzeigen" className="flex w-6 justify-end pr-0.5">
          <Chevron dir="down" className="text-[#6f7a74]" />
        </button>
        <button aria-label="Abbrechen" className="flex h-full w-[17px] items-center justify-center border-l border-[#c5cacc]">
          <svg width="10" height="10" viewBox="0 0 10 10"><path d="M1 1l8 8M9 1L1 9" stroke="#6f7a74" strokeWidth="2" /></svg>
        </button>
      </div>
    </NavBar>
    <div className="flex min-h-0 flex-1">
      <Sidebar selectedFolder={1} cover="top-[2px] left-[51px] h-[187px] w-[98px]" />
      <DetailsView />
    </div>
    <StatusBar view="details" />
  </section>
);

export default function App() {
  return (
    <main className="flex h-screen min-h-[940px] overflow-hidden bg-[#505c6a] font-['Open_Sans','Noto_Sans',sans-serif] text-[12px] leading-4 text-[#1d0c1a]">
      <Desktop />
      <div className="flex min-w-0 flex-1 gap-[13px] pt-9 pr-[53px] pb-[49px]">
        <BilderWindow />
        <DetailsWindow />
      </div>
    </main>
  );
}
